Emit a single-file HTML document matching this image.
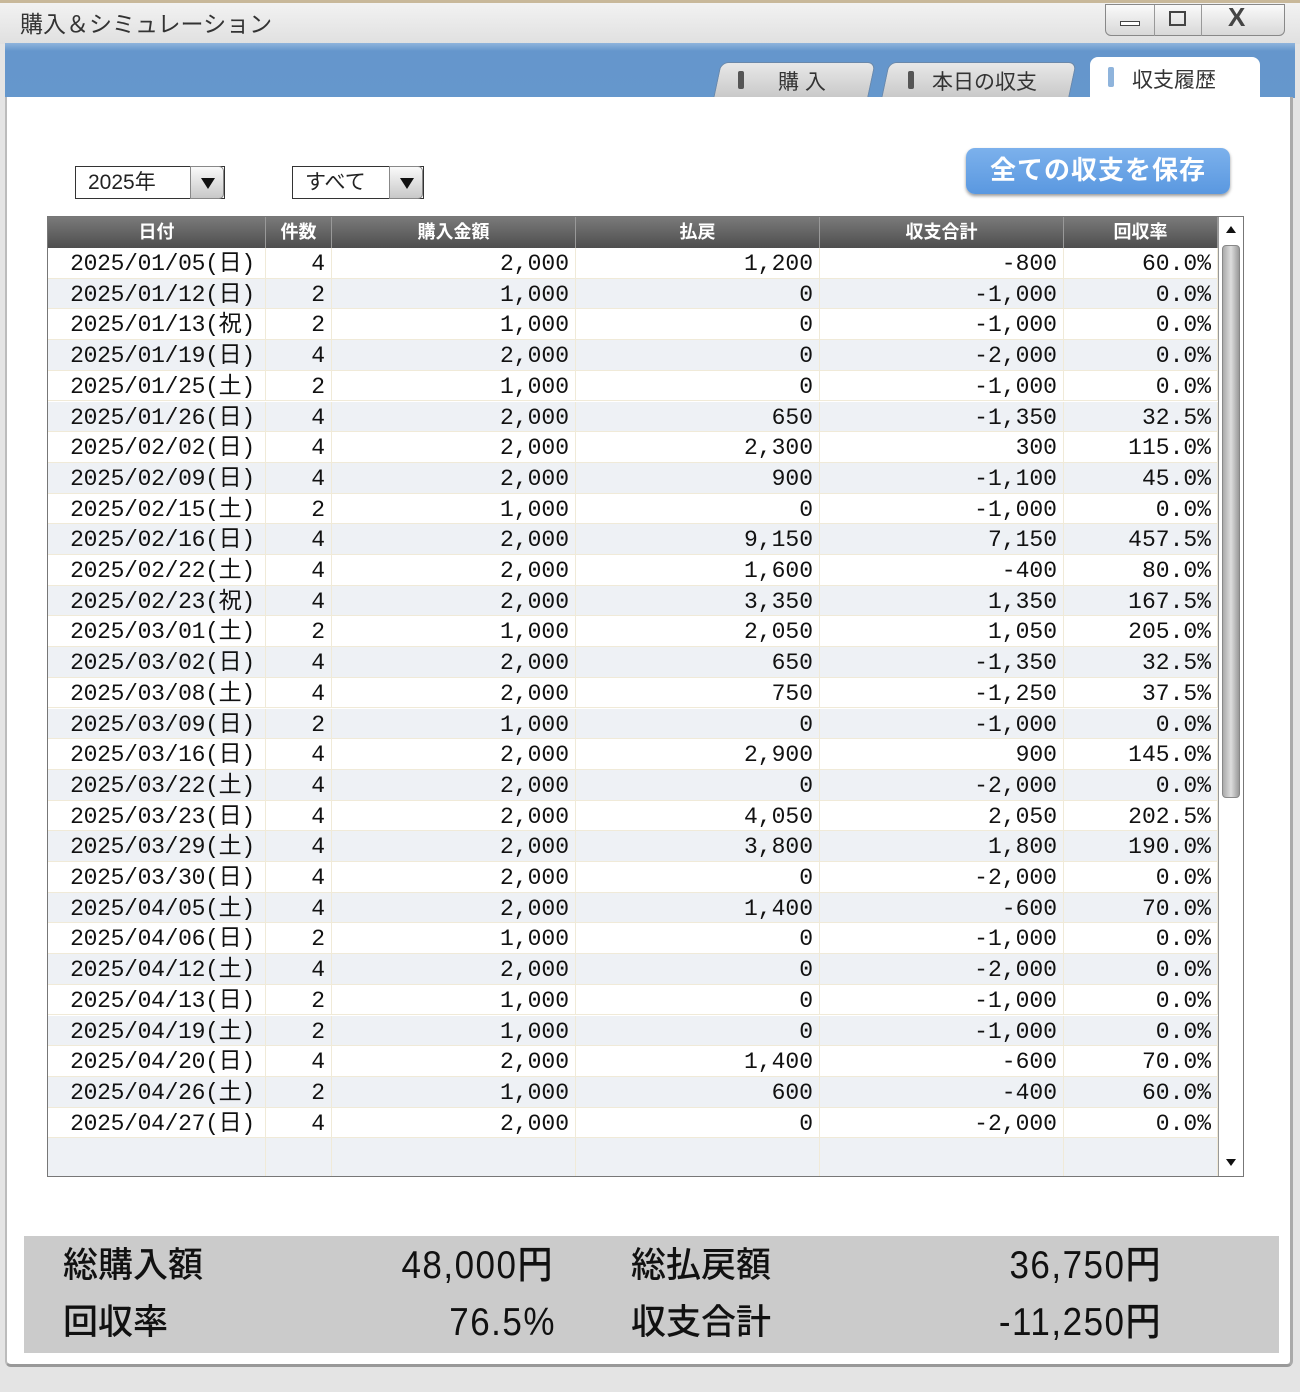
<!DOCTYPE html>
<html><head><meta charset="utf-8"><style>
*{margin:0;padding:0;box-sizing:border-box}
body{width:1300px;height:1392px;background:#e4e4e4;font-family:"Liberation Sans","Noto Sans CJK JP",sans-serif;position:relative;overflow:hidden}
.title{position:absolute;left:0;top:0;width:1300px;height:44px;background:linear-gradient(#f2f2f2,#e0e0e0);border-top:3px solid #c8b89a}
.title span{position:absolute;left:20px;top:2px;font-size:23px;color:#333}
.wb{position:absolute;top:4px;height:32px;border:1px solid #888;background:linear-gradient(#fafafa,#d8d8d8);border-radius:0 0 6px 6px}
.band{position:absolute;left:5px;top:43px;width:1290px;height:55px;background:linear-gradient(#8fb4dc 0,#6596cc 8px,#6597cc)}
.tab{position:absolute;top:62px;height:36px;background:linear-gradient(#e8e8e8,#c8c8c8);border:1px solid #6a88aa;border-bottom:none;border-radius:8px 8px 0 0;transform:skewX(-12deg)}
.tabt{position:absolute;font-size:21px;color:#333;top:66px}
.content{position:absolute;left:5px;top:97px;width:1288px;height:1270px;background:#fff;border-left:2px solid #bbb;border-right:3px solid #aaa;border-bottom:3px solid #999;border-radius:0 0 6px 6px}
.sel{position:absolute;top:166px;height:33px;border:1px solid #333;background:#fff;font-size:21px;padding:0 0 0 12px;line-height:31px;color:#222}
.sel i{position:absolute;right:0;top:-1px;width:34px;height:33px;border:1px solid #888;border-radius:0 5px 5px 0;background:linear-gradient(#fafafa,#c8c8c8)}
.sel i:after{content:"";position:absolute;left:10px;top:11px;border-left:7px solid transparent;border-right:7px solid transparent;border-top:11px solid #111}
.btn{position:absolute;left:966px;top:148px;width:264px;height:46px;border-radius:9px;background:linear-gradient(#7cb1ec,#5a98e0);box-shadow:0 2px 3px #999;color:#fff;font-size:26px;font-weight:bold;text-align:center;line-height:45px;letter-spacing:1px}
.tbl{position:absolute;left:47px;top:216px;width:1197px;height:961px;border:1px solid #777;background:#fff;overflow:hidden}
.hd{position:absolute;left:0;top:0;height:31px;width:1170px;background:linear-gradient(#7a7a7a,#4e4e4e);}
.hd div{position:absolute;top:0;height:31px;border-right:1px solid #999;color:#fff;font-weight:bold;font-size:18px;text-align:center;line-height:31px}
.row{position:absolute;left:0;width:1170px;height:30.7px;border-bottom:1px solid #f0ead8;font-family:"Liberation Mono","Noto Sans CJK JP",monospace;font-size:23px;color:#111;line-height:32px}
.row:nth-child(even){background:#eef1f5}
.row div{position:absolute;top:0;height:100%;border-right:1px solid #f0ead8;text-align:right;padding-right:6px}
.c1{left:0;width:218px;text-align:center!important;padding:0 0 0 12px!important;letter-spacing:-0.3px}
.c2{left:218px;width:66px}.c3{left:284px;width:244px}.c4{left:528px;width:244px}.c5{left:772px;width:244px}.c6{left:1016px;width:154px}
.sb{position:absolute;left:1170px;top:0;width:26px;height:960px;background:#fff;border-left:1px solid #999}
.thumb{position:absolute;left:3px;top:28px;width:18px;height:553px;border-radius:4px;background:linear-gradient(90deg,#aaa,#ddd,#999);border:1px solid #888}
.sum{position:absolute;left:24px;top:1236px;width:1255px;height:117px;background:#cbcbcb}
.sum div{position:absolute;font-size:35px;line-height:40px;height:40px;color:#111;font-family:"Liberation Sans","Noto Sans CJK JP",sans-serif;font-weight:500}
.sum .v{letter-spacing:1.5px;transform:scaleY(1.1)}
</style></head><body>
<div class="title"><span>購入＆シミュレーション</span></div>
<div class="wb" style="left:1105px;width:180px"></div>
<div style="position:absolute;left:1154px;top:5px;width:1px;height:31px;background:#999"></div>
<div style="position:absolute;left:1201px;top:5px;width:1px;height:31px;background:#999"></div>
<div style="position:absolute;left:1120px;top:21px;width:20px;height:5px;border:1px solid #444;background:#fff"></div>
<div style="position:absolute;left:1169px;top:11px;width:17px;height:15px;border:2px solid #444"></div>
<div style="position:absolute;left:1228px;top:2px;font-size:26px;font-weight:bold;color:#444">X</div>
<div class="band"></div>
<div class="tab" style="left:717px;width:155px"></div>
<div class="tab" style="left:885px;width:188px"></div>
<div style="position:absolute;left:1090px;top:57px;width:170px;height:42px;background:#fff;border-radius:8px 8px 0 0"></div>
<div style="position:absolute;left:738px;top:71px;width:6px;height:18px;background:#555;border-radius:2px"></div>
<div style="position:absolute;left:908px;top:71px;width:6px;height:18px;background:#555;border-radius:2px"></div>
<div style="position:absolute;left:1108px;top:67px;width:6px;height:20px;background:#8fb4dc;border-radius:2px"></div>
<div class="tabt" style="left:778px">購 入</div>
<div class="tabt" style="left:932px">本日の収支</div>
<div class="tabt" style="left:1132px;top:64px">収支履歴</div>
<div class="content"></div>
<div class="sel" style="left:75px;width:150px">2025年<i></i></div>
<div class="sel" style="left:292px;width:132px">すべて<i></i></div>
<div class="btn">全ての収支を保存</div>
<div class="tbl">
<div class="hd"><div style="left:0;width:218px">日付</div><div style="left:218px;width:66px">件数</div><div style="left:284px;width:244px">購入金額</div><div style="left:528px;width:244px">払戻</div><div style="left:772px;width:244px">収支合計</div><div style="left:1016px;width:154px">回収率</div></div>
<div style="position:absolute;left:0;top:31px;width:1170px;height:929px">
<div class="row" style="top:0px"><div class="c1">2025/01/05(日)</div><div class="c2">4</div><div class="c3">2,000</div><div class="c4">1,200</div><div class="c5">-800</div><div class="c6">60.0%</div></div>
<div class="row" style="top:30.7px"><div class="c1">2025/01/12(日)</div><div class="c2">2</div><div class="c3">1,000</div><div class="c4">0</div><div class="c5">-1,000</div><div class="c6">0.0%</div></div>
<div class="row" style="top:61.4px"><div class="c1">2025/01/13(祝)</div><div class="c2">2</div><div class="c3">1,000</div><div class="c4">0</div><div class="c5">-1,000</div><div class="c6">0.0%</div></div>
<div class="row" style="top:92.1px"><div class="c1">2025/01/19(日)</div><div class="c2">4</div><div class="c3">2,000</div><div class="c4">0</div><div class="c5">-2,000</div><div class="c6">0.0%</div></div>
<div class="row" style="top:122.8px"><div class="c1">2025/01/25(土)</div><div class="c2">2</div><div class="c3">1,000</div><div class="c4">0</div><div class="c5">-1,000</div><div class="c6">0.0%</div></div>
<div class="row" style="top:153.5px"><div class="c1">2025/01/26(日)</div><div class="c2">4</div><div class="c3">2,000</div><div class="c4">650</div><div class="c5">-1,350</div><div class="c6">32.5%</div></div>
<div class="row" style="top:184.2px"><div class="c1">2025/02/02(日)</div><div class="c2">4</div><div class="c3">2,000</div><div class="c4">2,300</div><div class="c5">300</div><div class="c6">115.0%</div></div>
<div class="row" style="top:214.9px"><div class="c1">2025/02/09(日)</div><div class="c2">4</div><div class="c3">2,000</div><div class="c4">900</div><div class="c5">-1,100</div><div class="c6">45.0%</div></div>
<div class="row" style="top:245.6px"><div class="c1">2025/02/15(土)</div><div class="c2">2</div><div class="c3">1,000</div><div class="c4">0</div><div class="c5">-1,000</div><div class="c6">0.0%</div></div>
<div class="row" style="top:276.3px"><div class="c1">2025/02/16(日)</div><div class="c2">4</div><div class="c3">2,000</div><div class="c4">9,150</div><div class="c5">7,150</div><div class="c6">457.5%</div></div>
<div class="row" style="top:307px"><div class="c1">2025/02/22(土)</div><div class="c2">4</div><div class="c3">2,000</div><div class="c4">1,600</div><div class="c5">-400</div><div class="c6">80.0%</div></div>
<div class="row" style="top:337.7px"><div class="c1">2025/02/23(祝)</div><div class="c2">4</div><div class="c3">2,000</div><div class="c4">3,350</div><div class="c5">1,350</div><div class="c6">167.5%</div></div>
<div class="row" style="top:368.4px"><div class="c1">2025/03/01(土)</div><div class="c2">2</div><div class="c3">1,000</div><div class="c4">2,050</div><div class="c5">1,050</div><div class="c6">205.0%</div></div>
<div class="row" style="top:399.1px"><div class="c1">2025/03/02(日)</div><div class="c2">4</div><div class="c3">2,000</div><div class="c4">650</div><div class="c5">-1,350</div><div class="c6">32.5%</div></div>
<div class="row" style="top:429.8px"><div class="c1">2025/03/08(土)</div><div class="c2">4</div><div class="c3">2,000</div><div class="c4">750</div><div class="c5">-1,250</div><div class="c6">37.5%</div></div>
<div class="row" style="top:460.5px"><div class="c1">2025/03/09(日)</div><div class="c2">2</div><div class="c3">1,000</div><div class="c4">0</div><div class="c5">-1,000</div><div class="c6">0.0%</div></div>
<div class="row" style="top:491.2px"><div class="c1">2025/03/16(日)</div><div class="c2">4</div><div class="c3">2,000</div><div class="c4">2,900</div><div class="c5">900</div><div class="c6">145.0%</div></div>
<div class="row" style="top:521.9px"><div class="c1">2025/03/22(土)</div><div class="c2">4</div><div class="c3">2,000</div><div class="c4">0</div><div class="c5">-2,000</div><div class="c6">0.0%</div></div>
<div class="row" style="top:552.6px"><div class="c1">2025/03/23(日)</div><div class="c2">4</div><div class="c3">2,000</div><div class="c4">4,050</div><div class="c5">2,050</div><div class="c6">202.5%</div></div>
<div class="row" style="top:583.3px"><div class="c1">2025/03/29(土)</div><div class="c2">4</div><div class="c3">2,000</div><div class="c4">3,800</div><div class="c5">1,800</div><div class="c6">190.0%</div></div>
<div class="row" style="top:614px"><div class="c1">2025/03/30(日)</div><div class="c2">4</div><div class="c3">2,000</div><div class="c4">0</div><div class="c5">-2,000</div><div class="c6">0.0%</div></div>
<div class="row" style="top:644.7px"><div class="c1">2025/04/05(土)</div><div class="c2">4</div><div class="c3">2,000</div><div class="c4">1,400</div><div class="c5">-600</div><div class="c6">70.0%</div></div>
<div class="row" style="top:675.4px"><div class="c1">2025/04/06(日)</div><div class="c2">2</div><div class="c3">1,000</div><div class="c4">0</div><div class="c5">-1,000</div><div class="c6">0.0%</div></div>
<div class="row" style="top:706.1px"><div class="c1">2025/04/12(土)</div><div class="c2">4</div><div class="c3">2,000</div><div class="c4">0</div><div class="c5">-2,000</div><div class="c6">0.0%</div></div>
<div class="row" style="top:736.8px"><div class="c1">2025/04/13(日)</div><div class="c2">2</div><div class="c3">1,000</div><div class="c4">0</div><div class="c5">-1,000</div><div class="c6">0.0%</div></div>
<div class="row" style="top:767.5px"><div class="c1">2025/04/19(土)</div><div class="c2">2</div><div class="c3">1,000</div><div class="c4">0</div><div class="c5">-1,000</div><div class="c6">0.0%</div></div>
<div class="row" style="top:798.2px"><div class="c1">2025/04/20(日)</div><div class="c2">4</div><div class="c3">2,000</div><div class="c4">1,400</div><div class="c5">-600</div><div class="c6">70.0%</div></div>
<div class="row" style="top:828.9px"><div class="c1">2025/04/26(土)</div><div class="c2">2</div><div class="c3">1,000</div><div class="c4">600</div><div class="c5">-400</div><div class="c6">60.0%</div></div>
<div class="row" style="top:859.6px"><div class="c1">2025/04/27(日)</div><div class="c2">4</div><div class="c3">2,000</div><div class="c4">0</div><div class="c5">-2,000</div><div class="c6">0.0%</div></div>
<div class="row" style="top:890.3px;height:40px"><div class="c1"></div><div class="c2"></div><div class="c3"></div><div class="c4"></div><div class="c5"></div><div class="c6"></div></div>
</div>
<div class="sb"><div style="position:absolute;left:7px;top:9px;border-left:5px solid transparent;border-right:5px solid transparent;border-bottom:7px solid #111"></div><div class="thumb"></div><div style="position:absolute;left:7px;top:942px;border-left:5px solid transparent;border-right:5px solid transparent;border-top:7px solid #111"></div></div>
</div>
<div class="sum">
<div style="left:39px;top:10px">総購入額</div>
<div class="v" style="left:300px;width:230px;text-align:right;top:10px">48,000円</div>
<div style="left:607px;top:10px">総払戻額</div>
<div class="v" style="left:900px;width:238px;text-align:right;top:10px">36,750円</div>
<div style="left:39px;top:67px">回収率</div>
<div class="v" style="left:300px;width:232px;text-align:right;top:67px">76.5%</div>
<div style="left:607px;top:67px">収支合計</div>
<div class="v" style="left:900px;width:238px;text-align:right;top:67px">-11,250円</div>
</div>
</body></html>
